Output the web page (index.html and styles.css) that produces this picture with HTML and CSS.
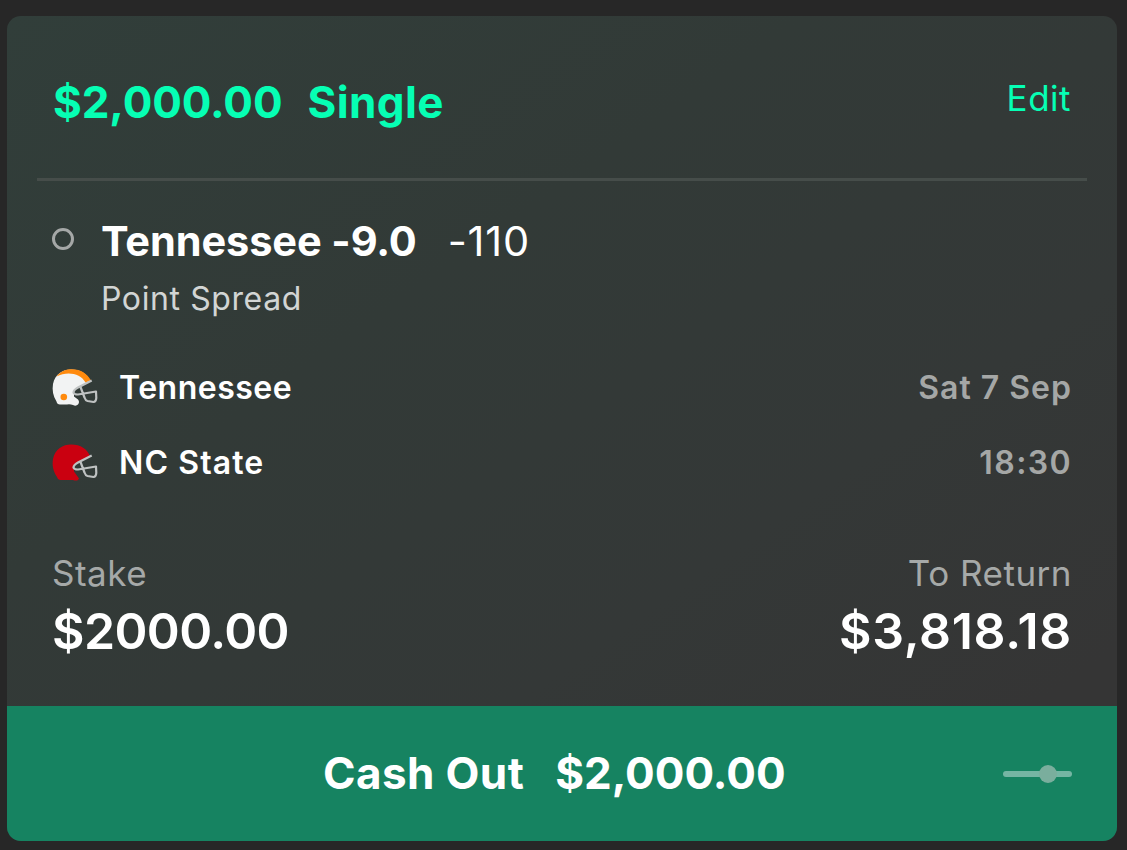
FILE: index.html
```html
<!DOCTYPE html>
<html lang="en">
<head>
<meta charset="utf-8">
<title>Bet</title>
<link rel="stylesheet" href="styles.css">
</head>
<body>
<main class="card">
  <header class="head">
    <div class="title"><span class="t-amount">$2,000.00</span><span class="t-type">Single</span></div>
    <span class="edit">Edit</span>
  </header>
  <section class="selection">
    <span class="ring"></span>
    <div class="pick"><span class="pick-name">Tennessee -9.0</span><span class="odds">-110</span></div>
    <div class="market">Point Spread</div>
  </section>
  <section class="teams">
    <div class="team">
      <svg class="helmet" viewBox="0 0 48 40"><path d="M4.500 33.500C1 28 0 22 1 16C3 6 11 1.500 19 1.500C29 1.500 35 6 38 13L30 17L22 21.500V28.500L26 31.500Q28 34 26 36.500Q24 38.500 21 37Q18 36 15 36.500H8Q5 36.500 4.500 33.500Z" fill="#f2f3f3"/><path d="M4.500 8.500C9 3 14 1.300 20 1.300C29 1.500 35 5.500 39 12.500L33.500 14.500C28.500 5 15 3 4.500 8.500Z" fill="#ff8a0d"/><circle cx="11.800" cy="29" r="3.300" fill="#ff8a0d"/><path class="mask" d="M39.700 12.500L26 19.500Q21.500 22 21.500 24.500Q22 26.500 26 26.500L44 23.500L44.300 30Q44 34 41.500 34L35.500 33Q33.500 32.500 32.500 29.500L28.500 19"/></svg>
      <span class="team-name n1">Tennessee</span><span class="when w1">Sat 7 Sep</span>
    </div>
    <div class="team">
      <svg class="helmet" viewBox="0 0 48 40"><path d="M5 34C1 28 0 22 1 16C3 6 11 1.500 19 1.500C29 1.500 35 6 38 13L30 17L22 21.500V28.500L27 35.500L26 37Q24 38 21 37H8Q5.500 36.500 5 34Z" fill="#ca0010"/><path class="mask" d="M39.700 12.500L26 19.500Q21.500 22 21.500 24.500Q22 26.500 26 26.500L44 23.500L44.300 30Q44 34 41.500 34L35.500 33Q33.500 32.500 32.500 29.500L28.500 19"/></svg>
      <span class="team-name n2">NC State</span><span class="when w2">18:30</span>
    </div>
  </section>
  <section class="totals">
    <div><div class="label l1">Stake</div><div class="money m1">$2000.00</div></div>
    <div class="right"><div class="label l2">To Return</div><div class="money m2">$3,818.18</div></div>
  </section>
  <footer class="cashout">
    <span class="co-label">Cash Out</span><span class="co-amount">$2,000.00</span>
    <svg class="slider" viewBox="0 0 70 20"><path d="M4 10H67" stroke="#75b5a3" stroke-width="6" stroke-linecap="round"/><circle cx="46" cy="10" r="9" fill="#7aae9d"/></svg>
  </footer>
</main>
</body>
</html>
```
FILE: styles.css
```css
* { box-sizing: border-box; }
body { margin: 0; height: 850px; padding: 16px 10px 9px 7px; background: #272727; font-family: Inter, "Liberation Sans", sans-serif; color: #fff; overflow: hidden; }
.card { height: 825px; border-radius: 14px; overflow: hidden; display: flex; flex-direction: column; background: linear-gradient(145deg, #313e3a 0%, #323a37 35%, #343837 65%, #353535 88%); }
.head { height: 165px; margin: 0 30px; padding: 58px 16px 0; border-bottom: 3px solid #464d4a; display: flex; justify-content: space-between; color: #06ffb4; flex: none; }
.title { display: flex; gap: 25px; font-size: 44px; line-height: 56px; font-weight: 700; }
.t-amount { letter-spacing: -0.1px; }
.t-type { letter-spacing: 0.4px; }
.edit { font-size: 35px; line-height: 49px; letter-spacing: 0.5px; }
.selection { display: grid; grid-template-columns: 50px 1fr; align-content: start; padding: 32px 45px 0 44px; height: 170px; flex: none; }
.ring { width: 22px; height: 22px; border: 3px solid #a5a8a7; border-radius: 50%; margin: 15px 0 0 1px; }
.pick { display: flex; gap: 31px; font-size: 41.5px; line-height: 56px; }
.pick-name { font-weight: 700; letter-spacing: -0.1px; }
.odds { letter-spacing: 0.8px; }
.market { font-size: 32px; line-height: 46px; margin-top: 7px; color: #d2d5d4; letter-spacing: 0.6px; grid-column: 2; }
.teams { height: 170px; flex: none; padding: 0 45px; }
.team { display: flex; align-items: center; height: 75px; line-height: 40px; }
.helmet { width: 48px; height: 40px; margin: -1px 19px 0 0; }
.mask { fill: none; stroke: #bfc2c2; stroke-width: 2.2; stroke-linejoin: round; }
.team-name, .when { font-size: 32px; font-weight: 600; margin-top: -1px; }
.when { margin-left: auto; color: #a5a7a6; }
.n1 { letter-spacing: 0.5px; }
.n2 { letter-spacing: 1.1px; }
.w1 { letter-spacing: 1px; }
.w2 { letter-spacing: 1.4px; }
.totals { display: flex; justify-content: space-between; padding: 29px 45px 0; flex: 1; }
.right { text-align: right; }
.label { font-size: 35px; line-height: 46px; color: #a6a9a8; letter-spacing: 0.5px; }
.money { font-size: 50px; line-height: 70px; font-weight: 600; }
.m1 { letter-spacing: -0.6px; }
.m2 { letter-spacing: 0.7px; }
.cashout { height: 135px; flex: none; background: #168361; display: flex; align-items: center; padding: 0 45px 0 316px; font-size: 44px; line-height: 56px; font-weight: 700; }
.co-label { margin-right: 31px; letter-spacing: 0.4px; }
.cashout span { margin-top: -2px; }
.slider { width: 70px; height: 20px; margin-left: auto; }
```
